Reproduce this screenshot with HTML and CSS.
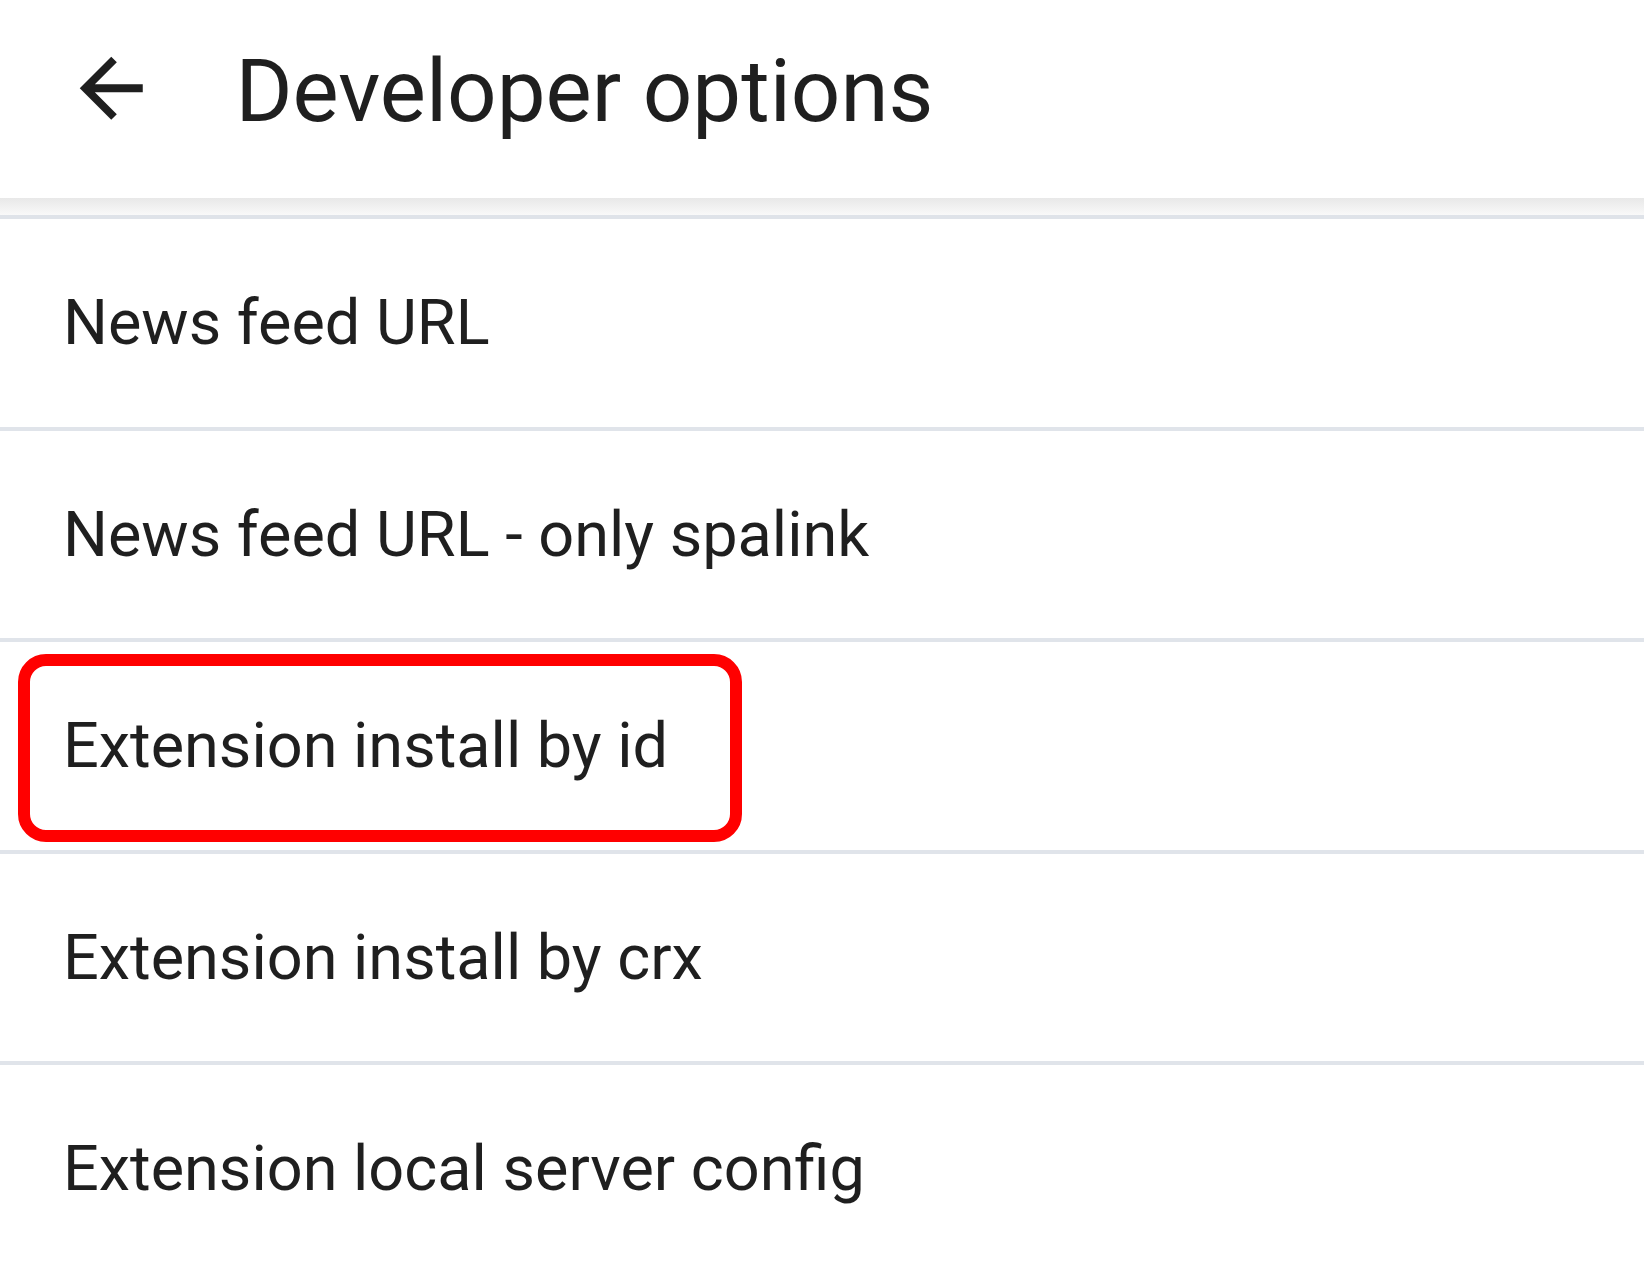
FILE: index.html
```html
<!DOCTYPE html>
<html>
<head>
<meta charset="utf-8">
<link rel="stylesheet" href="styles.css">
</head>
<body>
<header class="toolbar">
  <svg class="back" viewBox="0 0 24 24" aria-hidden="true"><path d="M20 11H7.83l5.59-5.59L12 4l-8 8 8 8 1.41-1.41L7.83 13H20v-2z"/></svg>
  <h1 class="title">Developer options</h1>
</header>
<div class="shadow"></div>
<ul class="list">
  <li class="row">News feed URL</li>
  <li class="row">News feed URL - only spalink</li>
  <li class="row highlighted">Extension install by id<span class="mark"></span></li>
  <li class="row">Extension install by crx</li>
  <li class="row">Extension local server config</li>
</ul>
</body>
</html>
```
FILE: styles.css
```css
html, body {
  margin: 0;
  padding: 0;
  background: #ffffff;
  overflow: hidden;
}
body {
  width: 1644px;
  height: 1267px;
  font-family: Roboto, "Noto Sans", "Liberation Sans", sans-serif;
  color: #1f1f1f;
}
.toolbar {
  box-sizing: border-box;
  height: 198px;
  display: flex;
  align-items: flex-start;
  padding: 41px 0 0 64px;
}
.back {
  width: 94.5px;
  height: 94.5px;
  flex: none;
  fill: #1f1f1f;
}
.title {
  margin: 7px 0 0 77px;
  font-size: 87px;
  line-height: 1;
  font-weight: 400;
  letter-spacing: 0;
}
.shadow {
  height: 17px;
  background: linear-gradient(#e8e8e8, #f9f9f9);
  border-bottom: 4px solid #dfe3e9;
}
.list {
  list-style: none;
  margin: 0;
  padding: 0;
}
.row {
  position: relative;
  box-sizing: border-box;
  height: 211.5px;
  border-bottom: 4px solid #e0e4ea;
  display: flex;
  align-items: center;
  padding-left: 63px;
  font-size: 63px;
  line-height: 1;
}
.mark {
  position: absolute;
  left: 18px;
  top: 12px;
  width: 724px;
  height: 188px;
  box-sizing: border-box;
  border: 12.5px solid #ff0000;
  border-radius: 28px;
}
```
